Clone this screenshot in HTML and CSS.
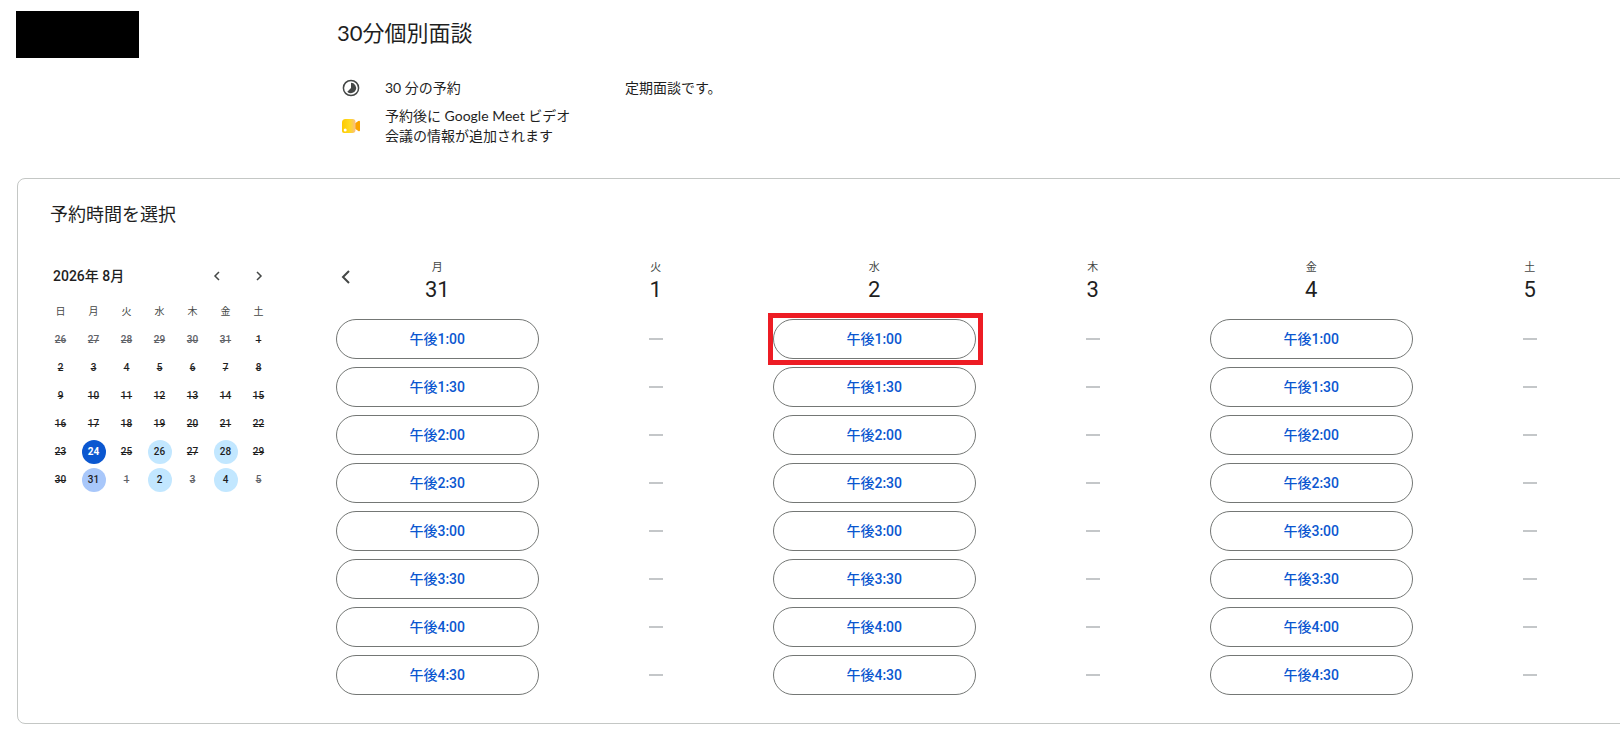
FILE: index.html
```html
<!DOCTYPE html>
<html lang="ja">
<head>
<meta charset="utf-8">
<meta name="viewport" content="width=device-width, initial-scale=1">
<title>30分個別面談</title>
<link rel="stylesheet" href="styles.css">
</head>
<body>
<header class="intro">
  <div class="owner"></div>
  <div class="about">
    <h1 class="about-title">30分個別面談</h1>
    <div class="about-body">
      <ul class="facts">
        <li class="fact">
          <svg class="fact-icon" viewBox="0 0 20 20" aria-hidden="true"><circle cx="10" cy="10" r="7.6" fill="none" stroke="#444746" stroke-width="1.5"/><path d="M10 4.8a5.2 5.2 0 1 1-3.7 8.9L10 10z" fill="#444746"/></svg>
          <span>30 分の予約</span>
        </li>
        <li class="fact">
          <svg class="fact-icon" viewBox="0 0 20 20" aria-hidden="true">
            <defs>
              <linearGradient id="body" x1="0" x2="1"><stop offset="0" stop-color="#fdc900"/><stop offset=".55" stop-color="#ffda1f"/><stop offset=".8" stop-color="#fccb52"/><stop offset="1" stop-color="#f8bd8d"/></linearGradient>
            </defs>
            <path d="M13 8.1 17.3 5q1.7-.8 1.7 1v8q0 1.8-1.7 1L13 11.9z" fill="#fba400"/>
            <path d="M4.5 3H11.500q3 0 3 3v8q0 3-3 3H3q-2 0-2-2V6.500Q1 3 4.500 3z" fill="url(#body)"/>
            <circle cx="4.200" cy="14" r="1.500" fill="#fff"/>
          </svg>
          <span>予約後に Google Meet ビデオ会議の情報が追加されます</span>
        </li>
      </ul>
      <p class="note">定期面談です。</p>
    </div>
  </div>
</header>
<main class="panel">
  <h2 class="panel-title">予約時間を選択</h2>
  <div class="picker">
    <section class="month" aria-label="2026年 8月">
      <div class="month-bar">
        <span class="month-name">2026年 8月</span>
        <button class="step" aria-label="前の月"><svg viewBox="0 0 12 12"><path d="M8 2 4 6l4 4"/></svg></button>
        <button class="step" aria-label="次の月"><svg viewBox="0 0 12 12"><path d="m4 2 4 4-4 4"/></svg></button>
      </div>
      <table class="days">
        <thead><tr><th>日</th><th>月</th><th>火</th><th>水</th><th>木</th><th>金</th><th>土</th></tr></thead>
        <tbody>
          <tr class="outside"><td><s>26</s></td><td><s>27</s></td><td><s>28</s></td><td><s>29</s></td><td><s>30</s></td><td><s>31</s></td><td class="inside"><s>1</s></td></tr>
          <tr><td><s>2</s></td><td><s>3</s></td><td><s>4</s></td><td><s>5</s></td><td><s>6</s></td><td><s>7</s></td><td><s>8</s></td></tr>
          <tr><td><s>9</s></td><td><s>10</s></td><td><s>11</s></td><td><s>12</s></td><td><s>13</s></td><td><s>14</s></td><td><s>15</s></td></tr>
          <tr><td><s>16</s></td><td><s>17</s></td><td><s>18</s></td><td><s>19</s></td><td><s>20</s></td><td><s>21</s></td><td><s>22</s></td></tr>
          <tr><td><s>23</s></td><td><button class="day today">24</button></td><td><s>25</s></td><td><button class="day">26</button></td><td><s>27</s></td><td><button class="day">28</button></td><td><s>29</s></td></tr>
          <tr class="outside"><td class="inside"><s>30</s></td><td><button class="day selected">31</button></td><td><s>1</s></td><td><button class="day">2</button></td><td><s>3</s></td><td><button class="day">4</button></td><td><s>5</s></td></tr>
        </tbody>
      </table>
    </section>
    <section class="week" aria-label="予約可能な時間">
      <button class="week-back" aria-label="前の週"><svg viewBox="0 0 16 16"><path d="M11 2 5 8l6 6"/></svg></button>
      <div class="column first">
        <h3 class="date"><span class="weekday">月</span><span class="number">31</span></h3>
        <button class="slot">午後1:00</button><button class="slot">午後1:30</button><button class="slot">午後2:00</button><button class="slot">午後2:30</button><button class="slot">午後3:00</button><button class="slot">午後3:30</button><button class="slot">午後4:00</button><button class="slot">午後4:30</button>
      </div>
      <div class="column">
        <h3 class="date"><span class="weekday">火</span><span class="number">1</span></h3>
        <i class="none"></i><i class="none"></i><i class="none"></i><i class="none"></i><i class="none"></i><i class="none"></i><i class="none"></i><i class="none"></i>
      </div>
      <div class="column">
        <h3 class="date"><span class="weekday">水</span><span class="number">2</span></h3>
        <button class="slot marked">午後1:00</button><button class="slot">午後1:30</button><button class="slot">午後2:00</button><button class="slot">午後2:30</button><button class="slot">午後3:00</button><button class="slot">午後3:30</button><button class="slot">午後4:00</button><button class="slot">午後4:30</button>
      </div>
      <div class="column">
        <h3 class="date"><span class="weekday">木</span><span class="number">3</span></h3>
        <i class="none"></i><i class="none"></i><i class="none"></i><i class="none"></i><i class="none"></i><i class="none"></i><i class="none"></i><i class="none"></i>
      </div>
      <div class="column">
        <h3 class="date"><span class="weekday">金</span><span class="number">4</span></h3>
        <button class="slot">午後1:00</button><button class="slot">午後1:30</button><button class="slot">午後2:00</button><button class="slot">午後2:30</button><button class="slot">午後3:00</button><button class="slot">午後3:30</button><button class="slot">午後4:00</button><button class="slot">午後4:30</button>
      </div>
      <div class="column">
        <h3 class="date"><span class="weekday">土</span><span class="number">5</span></h3>
        <i class="none"></i><i class="none"></i><i class="none"></i><i class="none"></i><i class="none"></i><i class="none"></i><i class="none"></i><i class="none"></i>
      </div>
    </section>
  </div>
</main>
</body>
</html>
```
FILE: styles.css
```css
* {
  box-sizing: border-box;
}

body {
  margin: 0;
  overflow-x: hidden;
  background: #fff;
  color: #1f1f1f;
  font: 400 14px/20px Lato, "Noto Sans CJK JP", sans-serif;
}

h1, h2, h3, p, ul {
  margin: 0;
  padding: 0;
  font-weight: 400;
}

button {
  padding: 0;
  border: 0;
  background: none;
  color: inherit;
  font: inherit;
  cursor: pointer;
}

.intro {
  display: grid;
  grid-template-columns: 321px 1fr;
  padding: 11px 16px 32px;
}

.owner {
  width: 123px;
  height: 47px;
  background: #000;
}

.about-title {
  padding-top: 8px;
  font-size: 22px;
  line-height: 28px;
}

.about-body {
  display: grid;
  grid-template-columns: 240px 1fr;
  column-gap: 48px;
  padding-top: 31px;
}

.facts {
  display: grid;
  gap: 8px;
  list-style: none;
}

.fact {
  display: grid;
  grid-template-columns: 20px 192px;
  align-items: center;
  column-gap: 24px;
  padding-left: 4px;
}

.fact-icon {
  width: 20px;
  height: 20px;
}

.panel {
  margin: 0 -32px 22px 17px;
  padding: 23px 12px 28px 32px;
  border: 1px solid #c4c7c5;
  border-radius: 8px;
}

.panel-title {
  font-size: 18px;
  line-height: 24px;
}

.picker {
  display: grid;
  grid-template-columns: 278px 1fr;
  padding-top: 33px;
  font-family: Roboto, "Noto Sans CJK JP", sans-serif;
}

.month-bar {
  display: grid;
  grid-template-columns: 1fr 42px 42px;
  align-items: center;
  width: 230px;
  padding: 1px 0 0 3px;
}

.month-name {
  font-weight: 500;
}

.step {
  height: 32px;
}

.step svg {
  display: block;
  width: 12px;
  height: 12px;
  margin: 0 auto;
}

svg path:only-child {
  fill: none;
  stroke: #444746;
  stroke-width: 2;
}

.step svg path:only-child {
  stroke-width: 1.5;
}

.days {
  width: 231px;
  margin: 6px 0 0 -6px;
  border-collapse: collapse;
  table-layout: fixed;
  font-size: 10px;
  font-weight: 500;
  line-height: 24px;
  text-align: center;
}

.days th,
.days td {
  height: 28px;
  padding: 0;
}

.days th {
  color: #444746;
  font-weight: 400;
}

.outside s {
  color: #5f6368;
}

.inside s {
  color: inherit;
}

.day {
  display: block;
  width: 24px;
  height: 24px;
  margin: 0 auto;
  border-radius: 50%;
  background: #c2e7ff;
}

.today {
  background: #0b57d0;
  color: #fff;
  font-weight: 700;
}

.selected {
  background: #a8c7fa;
}

.week {
  display: grid;
  grid-template-columns: repeat(6, 1fr);
}

.week-back {
  grid-area: 1 / 1;
  align-self: start;
  z-index: 1;
  width: 36px;
  height: 36px;
}

.week-back svg {
  display: block;
  width: 16px;
  height: 16px;
  margin: 0 auto;
}

.column {
  display: grid;
  gap: 8px;
  align-content: start;
  padding: 0 8px;
}

.first {
  grid-area: 1 / 1;
}

.date {
  display: grid;
  height: 52px;
  text-align: center;
  align-content: start;
}

.weekday {
  color: #444746;
  font-size: 11px;
  line-height: 18px;
}

.number {
  font-size: 22px;
  line-height: 26px;
}

.slot {
  position: relative;
  height: 40px;
  border: 1px solid #747775;
  border-radius: 20px;
  color: #0b57d0;
  font-weight: 500;
}

.marked::after {
  content: "";
  position: absolute;
  inset: -7px -8px -7px -6px;
  border: 5px solid #ed1c24;
}

.none {
  width: 14px;
  height: 2px;
  margin: 19px auto;
  background: #c4c7c9;
}
```
